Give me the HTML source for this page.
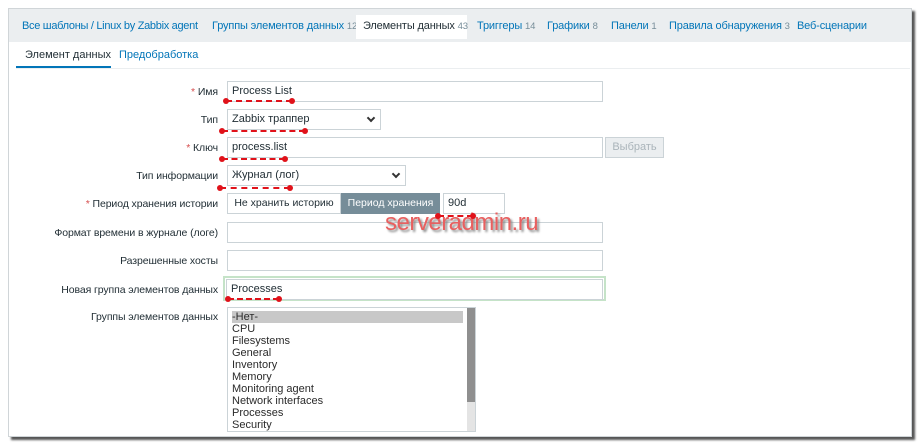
<!DOCTYPE html><html><head><meta charset="utf-8"><style>
*{box-sizing:border-box;margin:0;padding:0}
body{width:921px;height:446px;background:#fff;font-family:"Liberation Sans",sans-serif;font-size:11px;color:#1f2c33;position:relative;overflow:hidden}
.panel{position:absolute;left:8px;top:8px;width:904px;height:429px;background:#fff;border:1px solid #d0d5d8;box-shadow:3px 3px 2px #555}
.hdr{position:absolute;left:9px;top:9px;width:902px;height:33px;background:#ebeef0}
.a{position:absolute;white-space:nowrap}
.nav{color:#0275b8;font-size:11px;top:20px;letter-spacing:-0.15px}
.nav small{color:#768d99;font-size:9.5px}
.lbl{position:absolute;right:703px;white-space:nowrap;font-size:10.5px;letter-spacing:-0.1px;color:#1f2c33}
.st{color:#d64e4e}
.in{position:absolute;height:21px;border:1px solid #cbd3d7;background:#fff;padding:3px 4px;font-size:11px;white-space:nowrap}
.dash{position:absolute;height:2px;border-top:2px dashed #e0121a}
.dash:before,.dash:after{content:"";position:absolute;top:-4px;width:6px;height:6px;border-radius:50%;background:#e0121a}
.dash:before{left:-3px}.dash:after{right:-3px}
.chev{position:absolute;right:6px;top:5px;width:6px;height:6px;border-right:2px solid #333;border-bottom:2px solid #333;transform:rotate(45deg)}
</style></head><body>
<div class="panel"></div>
<div class="hdr"></div>
<div class="a nav" style="left:22px;letter-spacing:-0.3px">Все шаблоны / Linux by Zabbix agent</div>
<div class="a nav" style="left:212px">Группы элементов данных <small>12</small></div>
<div class="a" style="left:356px;top:15px;width:111px;height:24px;background:#fff"></div>
<div class="a nav" style="left:363px;color:#1f2c33">Элементы данных <small>43</small></div>
<div class="a nav" style="left:477px">Триггеры <small>14</small></div>
<div class="a nav" style="left:547px">Графики <small>8</small></div>
<div class="a nav" style="left:611px">Панели <small>1</small></div>
<div class="a nav" style="left:669px">Правила обнаружения <small>3</small></div>
<div class="a nav" style="left:797px">Веб-сценарии</div>
<div class="a" style="left:25px;top:49px;font-size:11px">Элемент данных</div>
<div class="a" style="left:119px;top:49px;font-size:11px;color:#0275b8">Предобработка</div>
<div class="a" style="left:16px;top:66px;width:95px;height:2px;background:#0275b8"></div>
<div class="a" style="left:16px;top:68px;width:894px;height:1px;background:#ebeef0"></div>

<div class="lbl" style="top:86px"><span class="st">*</span> Имя</div>
<div class="in" style="left:227px;top:81px;width:376px">Process List</div>
<div class="lbl" style="top:114px">Тип</div>
<div class="in" style="left:227px;top:109px;width:154px">Zabbix траппер<span class="chev"></span></div>
<div class="lbl" style="top:142px"><span class="st">*</span> Ключ</div>
<div class="in" style="left:227px;top:137px;width:376px">process.list</div>
<div class="in" style="left:605px;top:137px;width:59px;background:#ebeef0;color:#aab4ba;text-align:center">Выбрать</div>
<div class="lbl" style="top:170px">Тип информации</div>
<div class="in" style="left:227px;top:165px;width:179px">Журнал (лог)<span class="chev"></span></div>
<div class="lbl" style="top:198px"><span class="st">*</span> Период хранения истории</div>
<div class="in" style="left:227px;top:193px;width:114px;text-align:center;padding:3px 0;font-size:10.5px">Не хранить историю</div>
<div class="in" style="left:341px;top:193px;width:99px;background:#768d99;border-color:#768d99;color:#fff;text-align:center;padding:3px 0;font-size:10.5px">Период хранения</div>
<div class="in" style="left:443px;top:193px;width:62px">90d</div>
<div class="lbl" style="top:227px">Формат времени в журнале (логе)</div>
<div class="in" style="left:227px;top:222px;width:376px"></div>
<div class="lbl" style="top:255px">Разрешенные хосты</div>
<div class="in" style="left:227px;top:250px;width:376px"></div>
<div class="lbl" style="top:284px">Новая группа элементов данных</div>
<div class="a" style="left:223px;top:276px;width:383px;height:25px;border:2px solid #c5e3c8"></div>
<div class="in" style="left:226px;top:279px;width:377px">Processes</div>
<div class="lbl" style="top:311px">Группы элементов данных</div>
<div class="a" style="left:227px;top:307px;width:249px;height:125px;border:1px solid #cbd3d7;overflow:hidden;font-size:11px;line-height:12px;padding:3px 4px;color:#2a2a2a">
<div style="background:#c8c8c8;width:231px">-Нет-</div>CPU<br>Filesystems<br>General<br>Inventory<br>Memory<br>Monitoring agent<br>Network interfaces<br>Processes<br>Security
<div style="position:absolute;right:0;top:0;width:8px;height:123px;background:#e4e4e4"><div style="height:94px;background:#8f8f8f"></div></div></div>

<div class="a" style="left:385px;top:209px;font-size:24px;color:#e86060;text-shadow:2px 2px 2px #888;letter-spacing:-0.5px">serveradmin.ru</div>
<div class="dash" style="left:226px;top:100px;width:66px"></div>
<div class="dash" style="left:222px;top:130px;width:83px"></div>
<div class="dash" style="left:222px;top:158px;width:63px"></div>
<div class="dash" style="left:220px;top:187px;width:70px"></div>
<div class="dash" style="left:438px;top:215px;width:35px"></div>
<div class="dash" style="left:228px;top:298px;width:51px"></div>
</body></html>
